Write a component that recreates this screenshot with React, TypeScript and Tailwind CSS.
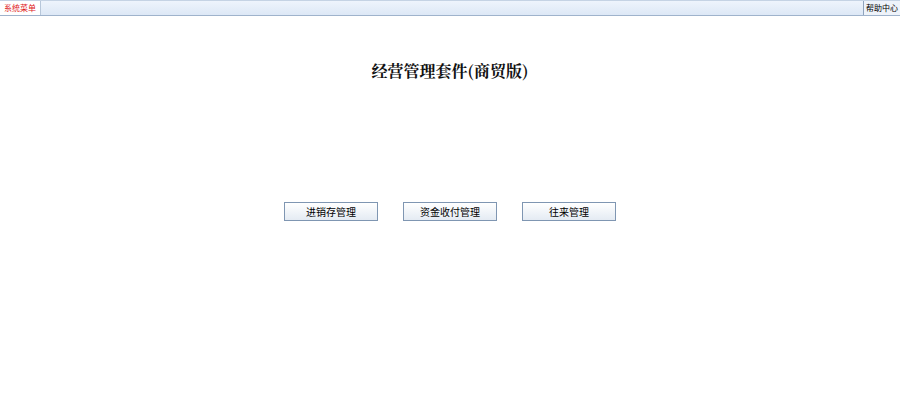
export default function App() {
  const btns = ['进销存管理', '资金收付管理', '往来管理'];
  return (
    <div className="w-[900px] h-[398px] bg-white overflow-hidden" style={{ fontFamily: '"Noto Sans CJK SC", sans-serif' }}>
      {/* top menu bar */}
      <div className="h-[16px] flex items-stretch bg-gradient-to-b from-[#eef4fc] to-[#dde8f6] border-b border-[#9fb3cc] border-t border-t-[#c5d3e4]">
        <div className="w-[41px] bg-white border-r border-[#b7c7da] flex items-center justify-center text-[8px] leading-none text-[#e0201c] whitespace-nowrap">
          系统菜单
        </div>
        <div className="flex-1" />
        <div className="w-[37px] border-l border-[#8fa3bd] bg-[#eef3fa] flex items-center justify-center text-[8px] leading-none text-black whitespace-nowrap">
          帮助中心
        </div>
      </div>

      <div className="pt-[45px] flex justify-center">
        <h1 className="text-[16px] font-bold leading-[20px] text-[#111] whitespace-nowrap" style={{ fontFamily: '"Noto Serif CJK SC", "Noto Sans CJK SC", serif' }}>
          经营管理套件(商贸版)
        </h1>
      </div>

      <div className="mt-[121px] flex justify-center gap-[25px]">
        {btns.map((b) => (
          <button
            key={b}
            className="w-[94px] h-[19px] border border-[#7f96b2] bg-gradient-to-b from-white to-[#e4ebf3] text-[10px] leading-none text-black"
          >
            {b}
          </button>
        ))}
      </div>
    </div>
  );
}
